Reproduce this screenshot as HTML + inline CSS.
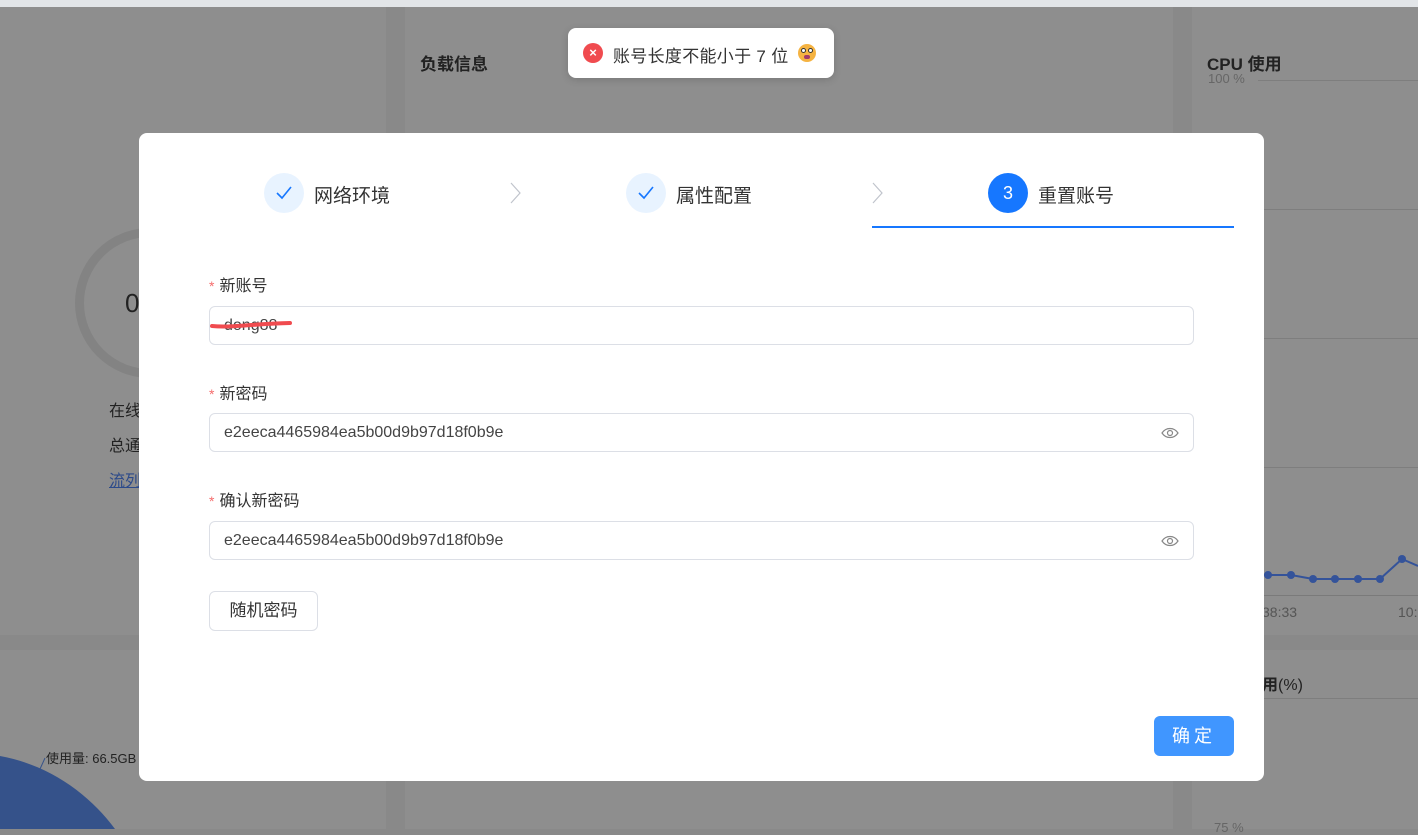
<!DOCTYPE html>
<html><head><meta charset="utf-8">
<style>
*{box-sizing:border-box;margin:0;padding:0}
body{width:1418px;height:829px;overflow:hidden;position:relative;background:#898989;font-family:"Liberation Sans","Noto Sans CJK SC",sans-serif;color:#333}
.abs{position:absolute}
.card{position:absolute;background:#8e8e8e}
.lbl{position:absolute;left:209px;font-size:16px;color:#333}
.lbl b{color:#f56c6c;font-weight:normal;margin-right:5px;font-size:14px}
.inp{position:absolute;left:209px;width:985px;height:39px;border:1px solid #dcdfe6;border-radius:6px;font-size:16px;color:#444;padding-left:14px;line-height:37px}
.eye{position:absolute;right:14px;top:12px}
</style></head><body>
<div class="abs" style="left:0;top:0;width:1418px;height:7px;background:#e2e5e8"></div>
<div class="card" style="left:0;top:7px;width:386px;height:628px"></div>
<div class="card" style="left:405px;top:7px;width:768px;height:628px"></div>
<div class="card" style="left:1192px;top:7px;width:226px;height:628px"></div>
<div class="card" style="left:0;top:650px;width:386px;height:179px"></div>
<div class="card" style="left:405px;top:650px;width:768px;height:179px"></div>
<div class="card" style="left:1192px;top:650px;width:226px;height:179px"></div>
<div class="abs" style="left:420px;top:50px;font-size:17px;font-weight:bold;color:#222">负载信息</div>
<div class="abs" style="left:75px;top:228px;width:150px;height:150px;border:9px solid #838383;border-radius:50%"></div>
<div class="abs" style="left:125px;top:288px;font-size:26px;color:#222">0</div>
<div class="abs" style="left:109px;top:397px;font-size:16px;color:#222">在线</div>
<div class="abs" style="left:109px;top:432px;font-size:16px;color:#222">总通</div>
<div class="abs" style="left:109px;top:467px;font-size:16px;color:#2c4a8a;text-decoration:underline">流列</div>
<div class="abs" style="left:1207px;top:50px;font-size:17px;font-weight:bold;color:#222">CPU 使用</div>
<div class="abs" style="left:1208px;top:71px;font-size:13px;color:#666">100 %</div>
<div class="abs" style="left:1258px;top:80px;width:160px;height:1px;background:#7e7e7e"></div>
<div class="abs" style="left:1192px;top:209px;width:226px;height:1px;background:#7e7e7e"></div>
<div class="abs" style="left:1192px;top:338px;width:226px;height:1px;background:#7e7e7e"></div>
<div class="abs" style="left:1192px;top:467px;width:226px;height:1px;background:#7e7e7e"></div>
<div class="abs" style="left:1192px;top:595px;width:226px;height:1px;background:#7a7a7a"></div>
<svg class="abs" style="left:1260px;top:550px" width="158" height="40"><polyline fill="none" stroke="#34539a" stroke-width="2" points="0,25 8,25 31,25 53,29 75,29 98,29 120,29 142,9 158,16"/><g fill="#34539a"><circle cx="8" cy="25" r="4"/><circle cx="31" cy="25" r="4"/><circle cx="53" cy="29" r="4"/><circle cx="75" cy="29" r="4"/><circle cx="98" cy="29" r="4"/><circle cx="120" cy="29" r="4"/><circle cx="142" cy="9" r="4"/></g></svg>
<div class="abs" style="left:1262px;top:604px;font-size:14px;color:#555">38:33</div>
<div class="abs" style="left:1398px;top:604px;font-size:14px;color:#555">10:</div>
<div class="abs" style="left:1262px;top:671px;font-size:16px;color:#222"><b>用</b>(%)</div>
<div class="abs" style="left:1262px;top:698px;width:156px;height:1px;background:#7e7e7e"></div>
<div class="abs" style="left:1214px;top:820px;font-size:13px;color:#666">75 %</div>
<svg class="abs" style="left:0;top:740px" width="140" height="89"><path d="M0,16 C50,25 90,55 115,89 L0,89Z" fill="#35528a"/><line x1="40" y1="29" x2="45" y2="18" stroke="#35528a"/></svg>
<div class="abs" style="left:46px;top:748px;font-size:13px;color:#222">使用量: 66.5GB</div>

<div class="abs" style="left:568px;top:28px;width:266px;height:50px;background:#fff;border-radius:8px;box-shadow:0 2px 8px rgba(0,0,0,.15)"></div>
<div class="abs" style="left:583px;top:43px;width:20px;height:20px;border-radius:50%;background:#f04b4f;color:#fff;font-size:13px;line-height:20px;text-align:center;font-weight:bold">×</div>
<div class="abs" style="left:613px;top:42px;font-size:17px;color:#333;letter-spacing:0.3px">账号长度不能小于 7 位</div>
<div class="abs" style="left:798px;top:44px;width:18px;height:18px;border-radius:50%;background:#f5b342"><div class="abs" style="left:3px;top:4px;width:5px;height:5px;border-radius:50%;background:#fff;border:1px solid #333"></div><div class="abs" style="left:10px;top:4px;width:5px;height:5px;border-radius:50%;background:#fff;border:1px solid #333"></div><div class="abs" style="left:6px;top:11px;width:6px;height:4px;border-radius:2px;background:#a23a6a"></div></div>

<div class="abs" style="left:139px;top:133px;width:1125px;height:648px;background:#fff;border-radius:8px">
</div>
<div class="abs" style="left:264px;top:173px;width:40px;height:40px;border-radius:50%;background:#e8f3ff"><svg width="40" height="40"><path d="M13,20 L18,25 L27,14" fill="none" stroke="#1677ff" stroke-width="1.6"/></svg></div>
<div class="abs" style="left:314px;top:181px;font-size:19px;color:#333">网络环境</div>
<svg class="abs" style="left:508px;top:181px" width="16" height="24"><path d="M3,2 L12,12 L3,22" fill="none" stroke="#c0c4cc" stroke-width="1.2"/></svg>
<div class="abs" style="left:626px;top:173px;width:40px;height:40px;border-radius:50%;background:#e8f3ff"><svg width="40" height="40"><path d="M13,20 L18,25 L27,14" fill="none" stroke="#1677ff" stroke-width="1.6"/></svg></div>
<div class="abs" style="left:676px;top:181px;font-size:19px;color:#333">属性配置</div>
<svg class="abs" style="left:870px;top:181px" width="16" height="24"><path d="M3,2 L12,12 L3,22" fill="none" stroke="#c0c4cc" stroke-width="1.2"/></svg>
<div class="abs" style="left:988px;top:173px;width:40px;height:40px;border-radius:50%;background:#1677ff;color:#fff;font-size:18px;line-height:40px;text-align:center">3</div>
<div class="abs" style="left:1038px;top:181px;font-size:19px;color:#333">重置账号</div>
<div class="abs" style="left:872px;top:226px;width:362px;height:2px;background:#1677ff"></div>

<div class="lbl" style="top:272px"><b>*</b>新账号</div>
<div class="inp" style="top:306px">dong88<svg class="abs" style="left:0;top:12px" width="84" height="12"><path d="M2,7 C20,9 40,5 80,4" stroke="#f04b4f" stroke-width="4" fill="none" stroke-linecap="round"/></svg></div>
<div class="lbl" style="top:380px"><b>*</b>新密码</div>
<div class="inp" style="top:413px">e2eeca4465984ea5b00d9b97d18f0b9e<svg class="eye" width="18" height="14"><path d="M1,7 C5,1 13,1 17,7 C13,13 5,13 1,7Z" fill="none" stroke="#888" stroke-width="1.2"/><circle cx="9" cy="7" r="2.5" fill="none" stroke="#888" stroke-width="1.2"/></svg></div>
<div class="lbl" style="top:487px"><b>*</b>确认新密码</div>
<div class="inp" style="top:521px">e2eeca4465984ea5b00d9b97d18f0b9e<svg class="eye" width="18" height="14"><path d="M1,7 C5,1 13,1 17,7 C13,13 5,13 1,7Z" fill="none" stroke="#888" stroke-width="1.2"/><circle cx="9" cy="7" r="2.5" fill="none" stroke="#888" stroke-width="1.2"/></svg></div>
<div class="abs" style="left:209px;top:591px;width:109px;height:40px;border:1px solid #dcdfe6;border-radius:6px;font-size:17px;text-align:center;line-height:38px;color:#333">随机密码</div>
<div class="abs" style="left:1154px;top:716px;width:80px;height:40px;background:#4096ff;border-radius:6px;color:#fff;font-size:18px;text-align:center;line-height:40px;letter-spacing:4px">确定</div>
</body></html>
